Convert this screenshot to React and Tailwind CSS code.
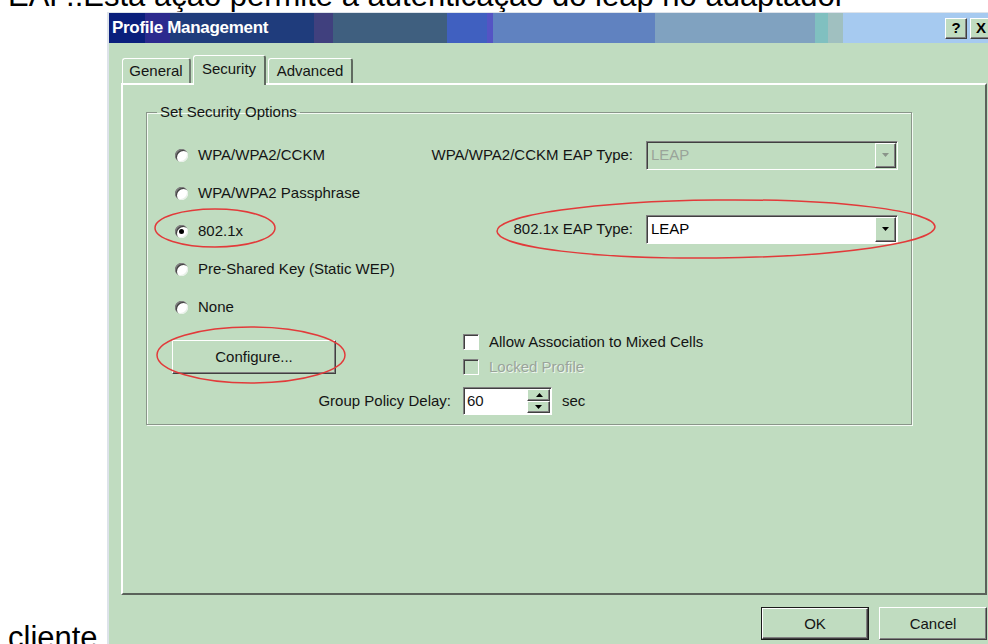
import React from "react";

const GREEN = "bg-[#c0dcc0]";

function Radio({ checked }) {
  return (
    <span className="relative flex h-[13px] w-[13px] shrink-0 items-center justify-center rounded-full bg-white shadow-[inset_1px_1px_0_#808080,inset_2px_2px_0_#404040,inset_-1px_-1px_0_#e8f0e8]">
      {checked && <span className="h-[5px] w-[5px] rounded-full bg-black" />}
    </span>
  );
}

function Checkbox({ disabled }) {
  return (
    <span
      className={`h-[16px] w-[16px] shrink-0 border border-t-[#808080] border-l-[#808080] border-b-white border-r-white shadow-[inset_1px_1px_0_#404040] ${
        disabled ? "bg-[#c0dcc0]" : "bg-white"
      }`}
    />
  );
}

function Arrow({ color, up }) {
  return (
    <svg width="8" height="4" viewBox="0 0 8 4" className={up ? "rotate-180" : ""}>
      <path d="M0 0h7L3.5 4z" fill={color} />
    </svg>
  );
}

function RaisedBox({ className = "", children }) {
  return (
    <div
      className={`flex items-center justify-center border border-t-white border-l-white border-b-[#404040] border-r-[#404040] bg-[#c0dcc0] shadow-[inset_-1px_-1px_0_#808080] ${className}`}
    >
      {children}
    </div>
  );
}

function Combo({ value, disabled }) {
  return (
    <div
      className={`flex h-[29px] w-[252px] border border-t-[#808080] border-l-[#808080] border-b-white border-r-white p-[1px] shadow-[inset_1px_1px_0_#404040] ${
        disabled ? "bg-[#c0dcc0]" : "bg-white"
      }`}
    >
      <span className={`flex flex-1 items-center pl-[3px] ${disabled ? "text-[#9aa49a]" : "text-black"}`}>{value}</span>
      <RaisedBox className="h-full w-[21px]">
        <Arrow color={disabled ? "#8a948a" : "#000"} />
      </RaisedBox>
    </div>
  );
}

function SpinBox() {
  return (
    <div className="flex h-[28px] w-[89px] border border-t-[#808080] border-l-[#808080] border-b-white border-r-white bg-white p-[1px] shadow-[inset_1px_1px_0_#404040]">
      <span className="flex flex-1 items-center pl-[2px]">60</span>
      <div className="flex w-[23px] flex-col">
        <RaisedBox className="flex-1">
          <Arrow color="#000" up />
        </RaisedBox>
        <RaisedBox className="flex-1">
          <Arrow color="#000" />
        </RaisedBox>
      </div>
    </div>
  );
}

const radios = [
  { label: "WPA/WPA2/CCKM" },
  { label: "WPA/WPA2 Passphrase" },
  { label: "802.1x", checked: true },
  { label: "Pre-Shared Key (Static WEP)" },
  { label: "None" },
];

function SecurityTab() {
  return (
    <fieldset className="ml-[23px] mt-[18px] h-[322px] w-[766px] border border-[#8a968a] shadow-[inset_1px_1px_0_#f4fbf4,1px_1px_0_#f4fbf4]">
      <legend className="ml-[10px] px-[3px] text-[15px] leading-[18px]">Set Security Options</legend>

      <div className="flex pt-[15px]">
        <div className="flex flex-col pl-[28px]">
          {radios.map((r) => (
            <div key={r.label} className="flex h-[38px] items-center gap-[10px]">
              <Radio checked={r.checked} />
              <span>{r.label}</span>
            </div>
          ))}
        </div>

        <div className="ml-auto flex flex-col items-end pr-[13px]">
          <div className="flex h-[38px] items-center gap-[13px]">
            <span>WPA/WPA2/CCKM EAP Type:</span>
            <Combo value="LEAP" disabled />
          </div>
          <div className="mt-[36px] flex h-[38px] items-center gap-[13px]">
            <span>802.1x EAP Type:</span>
            <Combo value="LEAP" />
          </div>
        </div>
      </div>

      <div className="mt-[7px] grid grid-cols-[304px_1fr] gap-x-[12px] gap-y-[12px]">
        <div>
          <RaisedBox className="ml-[25px] mt-[7px] h-[34px] w-[164px]">Configure...</RaisedBox>
        </div>
        <div className="flex flex-col gap-[8px]">
          <div className="flex h-[17px] items-center gap-[10px]">
            <Checkbox />
            <span>Allow Association to Mixed Cells</span>
          </div>
          <div className="flex h-[17px] items-center gap-[10px]">
            <Checkbox disabled />
            <span className="text-[#9aa49a] [text-shadow:1px_1px_0_#eef6ee]">Locked Profile</span>
          </div>
        </div>
        <div className="flex h-[28px] items-center justify-end">Group Policy Delay:</div>
        <div className="flex items-center gap-[10px]">
          <SpinBox />
          <span>sec</span>
        </div>
      </div>
    </fieldset>
  );
}

function Dialog() {
  return (
    <div className={`flex h-[640px] w-[892px] shrink-0 self-start flex-col border-t border-l-2 border-r-2 border-[#dde3ea] ${GREEN} text-[15px] leading-[18px] text-[#141414]`}>
      {/* caption bar */}
      <div className="flex h-[30px] items-center bg-[linear-gradient(90deg,#0a1f7c_36px,#2c2a8e_36px,#2c2a8e_61px,#1f3c7c_61px,#1f3c7c_205px,#40407e_205px,#40407e_224px,#3f5f7f_224px,#3f5f7f_338px,#4060c0_338px,#4060c0_378px,#5454c4_378px,#5454c4_384px,#6082c0_384px,#6082c0_546px,#80a2c0_546px,#80a2c0_706px,#80c0c0_706px,#80c0c0_719px,#a0c0c0_719px,#a0c0c0_734px,#a6caf0_734px)] pl-[3px] pr-[5px]">
        <span className="text-[17px] font-bold tracking-[-0.3px] text-white">Profile Management</span>
        <div className="ml-auto flex gap-[3px]">
          <RaisedBox className="h-[21px] w-[22px] text-[15px] font-bold text-black">?</RaisedBox>
          <RaisedBox className="h-[21px] w-[22px] text-[15px] font-bold text-black">X</RaisedBox>
        </div>
      </div>

      <div className="flex flex-1 flex-col pl-[12px] pr-[10px]">
        {/* tabs */}
        <div className="mt-[12px] flex h-[30px] items-end pl-[1px]">
          <div className="mb-[2px] flex h-[25px] w-[69px] items-center justify-center rounded-t-[3px] border-l border-t border-r-2 border-l-white border-t-white border-r-[#707a70]">
            General
          </div>
          <div className={`relative z-10 ml-[2px] flex h-[30px] w-[73px] items-start justify-center rounded-t-[3px] border-l border-t border-r-2 border-l-white border-t-white border-r-[#606a60] pt-[4px] ${GREEN}`}>
            Security
          </div>
          <div className="mb-[2px] ml-[2px] flex h-[25px] w-[85px] items-center justify-center rounded-t-[3px] border-l border-t border-r-2 border-l-white border-t-white border-r-[#606a60]">
            Advanced
          </div>
        </div>

        {/* tab page */}
        <div className="-mt-[2px] h-[512px] border-2 border-t-white border-l-white border-b-[#5a625a] border-r-[#5a625a]">
          <SecurityTab />
        </div>

        {/* dialog buttons */}
        <div className="mt-[12px] flex justify-end gap-[10px]">
          <div className="border border-[#1a1a1a]">
            <RaisedBox className="h-[31px] w-[106px] text-[15px]">OK</RaisedBox>
          </div>
          <RaisedBox className="h-[33px] w-[108px] text-[15px]">Cancel</RaisedBox>
        </div>
      </div>
    </div>
  );
}

export default function App() {
  return (
    <div className="relative h-[644px] w-[988px] overflow-hidden bg-white font-['Liberation_Sans',Arial,sans-serif] text-black">
      <p className="-mt-[20px] h-[32px] whitespace-nowrap pl-2 text-[31px] leading-none">
        EAP.:Esta ação permite a autenticação do leap no adaptador
      </p>
      <div className="flex h-[640px] items-end pl-2">
        <span className="-mb-[1px] mr-[9px] w-[90px] shrink-0 text-[31px] leading-none">cliente</span>
        <Dialog />
      </div>

      {/* red highlight marks drawn over the dialog */}
      <svg className="pointer-events-none absolute inset-0" width="988" height="644" viewBox="0 0 988 644">
        <g fill="none" stroke="#e23a3a" strokeWidth="1.5">
          <ellipse cx="215" cy="228" rx="60" ry="19" />
          <ellipse cx="716" cy="229" rx="219" ry="29" transform="rotate(-0.6 716 229)" />
          <ellipse cx="251" cy="355" rx="94" ry="28" />
        </g>
      </svg>
    </div>
  );
}
